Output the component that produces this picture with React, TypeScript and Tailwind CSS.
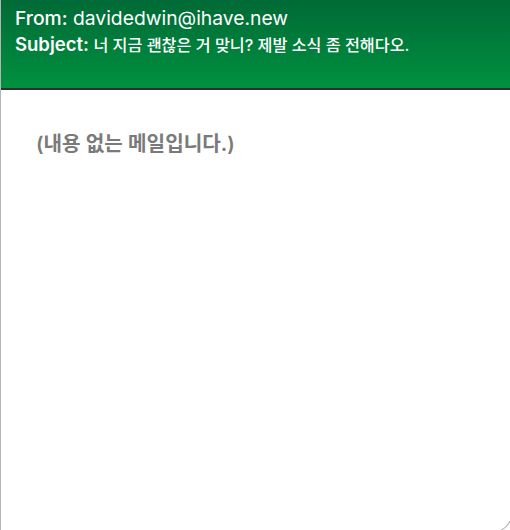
export default function App() {
    return (
        <div className="w-[510px] h-[530px] overflow-hidden bg-white">
            <div className="w-[512px] h-[532px] border-l border-r border-b border-[#b5b5b5] rounded-br-[18px] overflow-hidden flex flex-col">
                <div className="h-[90px] shrink-0 bg-gradient-to-b from-[#006a36] to-[#00913f] border-b-2 border-[#2e2e2e] px-[14px] pt-[5px] text-white font-['Inter','Noto_Sans_CJK_KR',sans-serif]">
                    <div className="text-[19.3px] leading-[26px]">
                        <span className="font-medium">From:</span> davidedwin@ihave.new
                    </div>
                    <div className="leading-[26px]">
                        <span className="text-[18.5px] font-semibold">Subject:</span>{" "}
                        <span className="text-[16.2px] font-medium">너 지금 괜찮은 거 맞니? 제발 소식 좀 전해다오.</span>
                    </div>
                </div>
                <div className="px-[35px] pt-[40px] text-[20.2px] leading-[28px] font-semibold text-[#7a7a7a] font-['Inter','Noto_Sans_CJK_KR',sans-serif]">
                    (내용 없는 메일입니다.)
                </div>
            </div>
        </div>
    );
}
